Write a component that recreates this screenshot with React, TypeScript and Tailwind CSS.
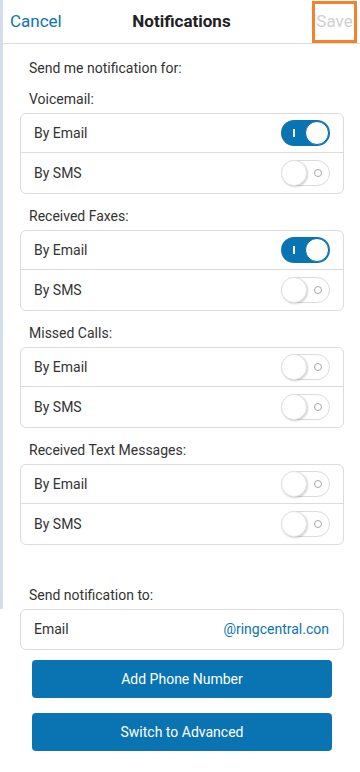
import React from "react";

const BLUE = "#0a74b3";

type Row = { label: string; on: boolean };
type Section = { title: string; rows: Row[] };

const sections: Section[] = [
  { title: "Voicemail:", rows: [{ label: "By Email", on: true }, { label: "By SMS", on: false }] },
  { title: "Received Faxes:", rows: [{ label: "By Email", on: true }, { label: "By SMS", on: false }] },
  { title: "Missed Calls:", rows: [{ label: "By Email", on: false }, { label: "By SMS", on: false }] },
  { title: "Received Text Messages:", rows: [{ label: "By Email", on: false }, { label: "By SMS", on: false }] },
];

function Toggle({ on }: { on: boolean }) {
  if (on) {
    return (
      <div className="flex h-[26px] w-[49px] items-center justify-between rounded-full bg-[#0a74b3] pl-[12px] pr-[1px]">
        <span className="h-[8px] w-[1.5px] bg-white" />
        <span className="h-[24px] w-[24px] rounded-full border border-[#0a6aa5] bg-white" />
      </div>
    );
  }
  return (
    <div className="flex h-[26px] w-[49px] items-center justify-between rounded-full border border-[#dcdcdc] bg-white pr-[7px]">
      <span className="-ml-px h-[26px] w-[26px] rounded-full border border-[#e2e2e2] bg-white shadow-[1px_1px_2px_rgba(0,0,0,0.18)]" />
      <span className="h-[8px] w-[8px] rounded-full border-[1.5px] border-[#a8a8a8]" />
    </div>
  );
}

export default function App() {
  return (
    <div
      className="h-[772px] w-[360px] overflow-hidden bg-white text-[#333]"
      style={{ fontFamily: "Roboto, 'Noto Sans', sans-serif" }}
    >
      <div className="h-[609px] border-l-[3px] border-[#d3deec]">
        <header className="grid h-[44px] grid-cols-[1fr_auto_1fr] items-center border-b border-[#dcdcdc]">
          <span className="ml-[7px] justify-self-start text-[17px] text-[#0a74b3]">Cancel</span>
          <span className="text-[17px] font-bold text-[#222]">Notifications</span>
          <span className="mr-[3px] flex h-[42px] w-[45px] items-center justify-center self-start justify-self-end border-[3px] border-[#f5822a] text-[17px] text-[#cfcfcf] mt-[1px]">
            Save
          </span>
        </header>

        <p className="ml-[26px] mt-[14px] h-[20px] text-[14px] leading-[20px]">Send me notification for:</p>

        {sections.map((s, i) => (
          <div key={s.title} className={i === 0 ? "mt-[11px]" : "mt-[12px]"}>
            <p className="ml-[26px] h-[20px] text-[14px] leading-[20px]">{s.title}</p>
            <div className="ml-[17px] mr-[16px] mt-[4px] divide-y divide-[#dcdcdc] rounded-[6px] border border-[#dcdcdc]">
              {s.rows.map((r) => (
                <div key={r.label} className="flex h-[40px] items-center justify-between px-[13px] first:h-[39px]">
                  <span className="text-[14px]">{r.label}</span>
                  <Toggle on={r.on} />
                </div>
              ))}
            </div>
          </div>
        ))}

        <p className="ml-[26px] mt-[40px] h-[20px] text-[14px] leading-[20px]">Send notification to:</p>
      </div>

      <div className="ml-[20px] mr-[16px] flex h-[41px] items-center justify-between rounded-[6px] border border-[#dcdcdc] pl-[13px] pr-[14px]">
        <span className="text-[14px]">Email</span>
        <span className="text-[14px] text-[#0a74b3]">@ringcentral.con</span>
      </div>

      <div className="ml-[32px] mt-[10px] flex w-[300px] flex-col gap-[15px]">
        <button
          className="flex h-[38px] items-center justify-center rounded-[4px] text-[14px] text-white"
          style={{ backgroundColor: BLUE }}
        >
          Add Phone Number
        </button>
        <button
          className="flex h-[38px] items-center justify-center rounded-[4px] text-[14px] text-white"
          style={{ backgroundColor: BLUE }}
        >
          Switch to Advanced
        </button>
      </div>
    </div>
  );
}
